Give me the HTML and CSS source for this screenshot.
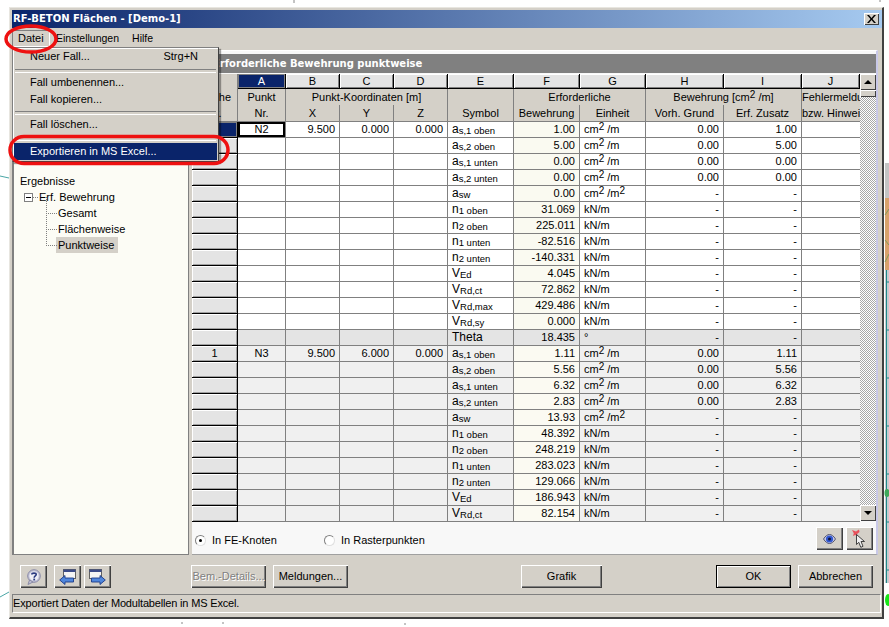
FILE: index.html
```html
<!DOCTYPE html>
<html lang="de">
<head>
<meta charset="utf-8">
<title>RF-BETON Flächen</title>
<link rel="stylesheet" href="styles.css">
</head>
<body>
<div class="desktop">
  <svg class="backdrop" width="889" height="627" viewBox="0 0 889 627">
    <rect x="885" y="163" width="4" height="35" fill="#c4c4c4"/>
    <rect x="885" y="198" width="4" height="72" fill="#d9a26c"/>
    <path d="M885 215l4-6M885 240l4 5M885 262l4-8" stroke="#7f9a5c" fill="none"/>
    <rect x="885" y="270" width="4" height="313" fill="#c8ccd0"/>
    <path d="M886.500 270V583" stroke="#1f8a8a" fill="none"/>
    <path d="M887 282h2M887 330h2M887 378h2M887 426h2M887 474h2M887 522h2M887 570h2" stroke="#1f8a8a" fill="none"/>
    <ellipse cx="887" cy="493" rx="2.500" ry="4" fill="#3fa85a"/>
    <ellipse cx="888" cy="600" rx="3" ry="6" fill="#19e619"/>
    <path d="M0 176L9 178M0 597L9 592" stroke="#4aa6a6" fill="none"/>
    <path d="M294 0v3M223 622v2M405 623v2M182 622v2M880 0v2" stroke="#888" fill="none"/>
  </svg>

  <div class="window">
    <div class="titlebar">
      <span class="title">RF-BETON Flächen - [Demo-1]</span>
      <span class="close"><svg width="9" height="8" viewBox="0 0 9 8"><path d="M0 0h2l2.500 3L7 0h2L5.500 4 9 8H7L4.500 5 2 8H0l3.500-4z" fill="#000"/></svg></span>
    </div>
    <div class="menubar">
      <span class="menu-top open">Datei</span>
      <span class="menu-top">Einstellungen</span>
      <span class="menu-top">Hilfe</span>
    </div>

    <div class="content">
      <aside class="sidebar">
        <ul class="tree">
          <li class="tree-root">Ergebnisse</li>
          <li class="tree-branch"><span class="expander"></span><span class="dots"></span>Erf. Bewehrung</li>
          <li class="tree-leaf">Gesamt</li>
          <li class="tree-leaf">Flächenweise</li>
          <li class="tree-leaf last"><span class="selected">Punktweise</span></li>
        </ul>
      </aside>

      <section class="panel">
        <h1 class="band">Erforderliche Bewehrung punktweise</h1>
        <div class="grid-wrap">
          <table class="grid">
            <colgroup>
              <col class="c-rh"><col class="c-a"><col class="c-xyz"><col class="c-xyz"><col class="c-xyz"><col class="c-sym"><col class="c-sym"><col class="c-sym"><col class="c-hi"><col class="c-hi"><col class="c-j">
            </colgroup>
            <thead>
              <tr class="letters">
                <th class="corner"></th><th class="active">A</th><th>B</th><th>C</th><th>D</th><th>E</th><th>F</th><th>G</th><th>H</th><th>I</th><th>J</th>
              </tr>
              <tr class="head1">
                <th class="hd sep">Fläche</th><th class="hd sep">Punkt</th><th class="hd sep" colspan="3">Punkt-Koordinaten [m]</th><th class="hd sep"></th><th class="hd sep" colspan="2">Erforderliche</th><th class="hd sep" colspan="2">Bewehrung [cm<sup>2</sup> /m]</th><th class="hd left">Fehlermeldung</th>
              </tr>
              <tr class="head2">
                <th class="hd sep">Nr.</th><th class="hd sep">Nr.</th><th class="hd sep">X</th><th class="hd sep">Y</th><th class="hd sep">Z</th><th class="hd sep">Symbol</th><th class="hd sep">Bewehrung</th><th class="hd sep">Einheit</th><th class="hd sep">Vorh. Grund</th><th class="hd sep">Erf. Zusatz</th><th class="hd left">bzw. Hinweise</th>
              </tr>
            </thead>
            <tbody>
              <tr><td class="rh cur"></td><td class="c focus">N2</td><td>9.500</td><td>0.000</td><td>0.000</td><td class="s">a<sub>s,1 oben</sub></td><td class="f">1.00</td><td class="u">cm<sup>2</sup> /m</td><td>0.00</td><td>1.00</td><td></td></tr>
              <tr><td class="rh"></td><td></td><td></td><td></td><td></td><td class="s">a<sub>s,2 oben</sub></td><td class="f">5.00</td><td class="u">cm<sup>2</sup> /m</td><td>0.00</td><td>5.00</td><td></td></tr>
              <tr><td class="rh"></td><td></td><td></td><td></td><td></td><td class="s">a<sub>s,1 unten</sub></td><td class="f">0.00</td><td class="u">cm<sup>2</sup> /m</td><td>0.00</td><td>0.00</td><td></td></tr>
              <tr><td class="rh"></td><td></td><td></td><td></td><td></td><td class="s">a<sub>s,2 unten</sub></td><td class="f">0.00</td><td class="u">cm<sup>2</sup> /m</td><td>0.00</td><td>0.00</td><td></td></tr>
              <tr><td class="rh"></td><td></td><td></td><td></td><td></td><td class="s">a<sub>sw</sub></td><td class="f">0.00</td><td class="u">cm<sup>2</sup> /m<sup>2</sup></td><td>-</td><td>-</td><td></td></tr>
              <tr><td class="rh"></td><td></td><td></td><td></td><td></td><td class="s">n<sub>1 oben</sub></td><td class="f">31.069</td><td class="u">kN/m</td><td>-</td><td>-</td><td></td></tr>
              <tr><td class="rh"></td><td></td><td></td><td></td><td></td><td class="s">n<sub>2 oben</sub></td><td class="f">225.011</td><td class="u">kN/m</td><td>-</td><td>-</td><td></td></tr>
              <tr><td class="rh"></td><td></td><td></td><td></td><td></td><td class="s">n<sub>1 unten</sub></td><td class="f">-82.516</td><td class="u">kN/m</td><td>-</td><td>-</td><td></td></tr>
              <tr><td class="rh"></td><td></td><td></td><td></td><td></td><td class="s">n<sub>2 unten</sub></td><td class="f">-140.331</td><td class="u">kN/m</td><td>-</td><td>-</td><td></td></tr>
              <tr><td class="rh"></td><td></td><td></td><td></td><td></td><td class="s">V<sub>Ed</sub></td><td class="f">4.045</td><td class="u">kN/m</td><td>-</td><td>-</td><td></td></tr>
              <tr><td class="rh"></td><td></td><td></td><td></td><td></td><td class="s">V<sub>Rd,ct</sub></td><td class="f">72.862</td><td class="u">kN/m</td><td>-</td><td>-</td><td></td></tr>
              <tr><td class="rh"></td><td></td><td></td><td></td><td></td><td class="s">V<sub>Rd,max</sub></td><td class="f">429.486</td><td class="u">kN/m</td><td>-</td><td>-</td><td></td></tr>
              <tr><td class="rh"></td><td></td><td></td><td></td><td></td><td class="s">V<sub>Rd,sy</sub></td><td class="f">0.000</td><td class="u">kN/m</td><td>-</td><td>-</td><td></td></tr>
              <tr class="theta"><td class="rh"></td><td></td><td></td><td></td><td></td><td class="s">Theta</td><td class="f">18.435</td><td class="u">°</td><td>-</td><td>-</td><td></td></tr>
              <tr class="alt"><td class="rh">1</td><td class="c">N3</td><td>9.500</td><td>6.000</td><td>0.000</td><td class="s">a<sub>s,1 oben</sub></td><td class="f">1.11</td><td class="u">cm<sup>2</sup> /m</td><td>0.00</td><td>1.11</td><td></td></tr>
              <tr class="alt"><td class="rh"></td><td></td><td></td><td></td><td></td><td class="s">a<sub>s,2 oben</sub></td><td class="f">5.56</td><td class="u">cm<sup>2</sup> /m</td><td>0.00</td><td>5.56</td><td></td></tr>
              <tr class="alt"><td class="rh"></td><td></td><td></td><td></td><td></td><td class="s">a<sub>s,1 unten</sub></td><td class="f">6.32</td><td class="u">cm<sup>2</sup> /m</td><td>0.00</td><td>6.32</td><td></td></tr>
              <tr class="alt"><td class="rh"></td><td></td><td></td><td></td><td></td><td class="s">a<sub>s,2 unten</sub></td><td class="f">2.83</td><td class="u">cm<sup>2</sup> /m</td><td>0.00</td><td>2.83</td><td></td></tr>
              <tr class="alt"><td class="rh"></td><td></td><td></td><td></td><td></td><td class="s">a<sub>sw</sub></td><td class="f">13.93</td><td class="u">cm<sup>2</sup> /m<sup>2</sup></td><td>-</td><td>-</td><td></td></tr>
              <tr class="alt"><td class="rh"></td><td></td><td></td><td></td><td></td><td class="s">n<sub>1 oben</sub></td><td class="f">48.392</td><td class="u">kN/m</td><td>-</td><td>-</td><td></td></tr>
              <tr class="alt"><td class="rh"></td><td></td><td></td><td></td><td></td><td class="s">n<sub>2 oben</sub></td><td class="f">248.219</td><td class="u">kN/m</td><td>-</td><td>-</td><td></td></tr>
              <tr class="alt"><td class="rh"></td><td></td><td></td><td></td><td></td><td class="s">n<sub>1 unten</sub></td><td class="f">283.023</td><td class="u">kN/m</td><td>-</td><td>-</td><td></td></tr>
              <tr class="alt"><td class="rh"></td><td></td><td></td><td></td><td></td><td class="s">n<sub>2 unten</sub></td><td class="f">129.066</td><td class="u">kN/m</td><td>-</td><td>-</td><td></td></tr>
              <tr class="alt"><td class="rh"></td><td></td><td></td><td></td><td></td><td class="s">V<sub>Ed</sub></td><td class="f">186.943</td><td class="u">kN/m</td><td>-</td><td>-</td><td></td></tr>
              <tr class="alt"><td class="rh"></td><td></td><td></td><td></td><td></td><td class="s">V<sub>Rd,ct</sub></td><td class="f">82.154</td><td class="u">kN/m</td><td>-</td><td>-</td><td></td></tr>
            </tbody>
          </table>
          <div class="scrollbar">
            <span class="sb-btn"><i class="arrow-up"></i></span>
            <span class="sb-thumb"></span>
            <span class="sb-track"></span>
            <span class="sb-btn"><i class="arrow-down"></i></span>
          </div>
        </div>
        <div class="options">
          <label class="opt opt-first"><span class="radio on"></span>In FE-Knoten</label>
          <label class="opt"><span class="radio"></span>In Rasterpunkten</label>
          <span class="opt-tools">
            <button class="btn icon-btn"><svg width="13" height="10" viewBox="0 0 13 10"><path d="M.5 5C2.500 1.800 4.500.5 6.500.5s4 1.300 6 4.500c-2 3.200-4 4.500-6 4.500S2.500 8.200.5 5z" fill="#c8cde8" stroke="#55556e"/><circle cx="6.500" cy="5" r="3.600" fill="#3358d0"/><circle cx="6.500" cy="5" r="1.500" fill="#0c1238"/></svg></button>
            <button class="btn icon-btn"><svg width="18" height="20" viewBox="0 0 18 20"><path d="M1 1l4 1.500L8 .5l.5 2.500-2.500 2 .8 2.500-2.600-1.500-2.200 1 .8-2.800z" fill="#e8505a"/><path d="M5.500 5.500v10l2.300-2.200 2 5 2.200-1-2-4.800h3.500z" fill="#f0f0f0" stroke="#303030" stroke-width=".9"/></svg></button>
          </span>
        </div>
      </section>
    </div>

    <div class="footer">
      <button class="btn icon-btn b-help"><svg width="15" height="16" viewBox="0 0 15 16"><circle cx="8" cy="7" r="6.300" fill="#c4c4d8" stroke="#8a8aa6"/><path d="M3.500 11L2 15.500 7 13z" fill="#c4c4d8" stroke="#8a8aa6"/><circle cx="8" cy="7" r="4.600" fill="#eeeef6"/><path d="M5.800 5.500C5.800 3.600 10.200 3.600 10.200 5.500 10.200 7 8.200 7 8.200 8.800" fill="none" stroke="#2a3a80" stroke-width="1.600"/><rect x="7.300" y="9.600" width="1.800" height="1.800" fill="#2a3a80"/></svg></button>
      <button class="btn icon-btn b-prev"><svg width="17" height="16" viewBox="0 0 17 16"><rect x="4.500" y=".5" width="12" height="9" fill="#f4f4f4" stroke="#606060"/><rect x="4.500" y=".5" width="12" height="2.500" fill="#3a4a88"/><path d="M.7 11L6 6.500V9h8.500v4H6v2.500z" fill="#4f86dc" stroke="#1c3a88" stroke-width=".9"/></svg></button>
      <button class="btn icon-btn b-next"><svg width="17" height="16" viewBox="0 0 17 16"><rect x=".5" y=".5" width="12" height="9" fill="#f4f4f4" stroke="#606060"/><rect x=".5" y=".5" width="12" height="2.500" fill="#3a4a88"/><path d="M16.300 11L11 6.500V9H2.500v4H11v2.500z" fill="#4f86dc" stroke="#1c3a88" stroke-width=".9"/></svg></button>
      <button class="btn disabled b-details">Bem.-Details...</button>
      <button class="btn b-msg">Meldungen...</button>
      <button class="btn b-graph">Grafik</button>
      <button class="btn default b-ok">OK</button>
      <button class="btn b-cancel">Abbrechen</button>
    </div>
    <div class="status">Exportiert Daten der Modultabellen in MS Excel.</div>
  </div>

  <div class="dropdown">
    <div class="mi"><span>Neuer Fall...</span><span class="key">Strg+N</span></div>
    <div class="ms"></div>
    <div class="mi"><span>Fall umbenennen...</span></div>
    <div class="mi"><span>Fall kopieren...</span></div>
    <div class="ms ms-b"></div>
    <div class="mi"><span>Fall löschen...</span></div>
    <div class="ms ms-c"></div>
    <div class="mi hot"><span>Exportieren in MS Excel...</span></div>
  </div>

  <svg class="marks" width="889" height="627" viewBox="0 0 889 627">
    <ellipse cx="31" cy="39" rx="25" ry="13" fill="none" stroke="#ee1111" stroke-width="3.500"/>
    <rect x="10" y="136.500" width="218" height="27" rx="14" ry="13.500" fill="none" stroke="#ee1111" stroke-width="3.500"/>
  </svg>
</div>
</body>
</html>
```
FILE: styles.css
```css
* { box-sizing: border-box; }
html, body { margin: 0; padding: 0; background: #fff; }
body { font: 11px/15px "Liberation Sans", Arial, sans-serif; color: #000; overflow: hidden; }

.desktop { position: relative; width: 889px; height: 627px; padding: 7px 0 0 9px; overflow: hidden; }
.backdrop, .marks { position: absolute; left: 0; top: 0; }
.marks { pointer-events: none; }

.window {
  position: relative;
  width: 875px; height: 612px;
  display: flex; flex-direction: column;
  background: #d4d0c8;
  border-style: solid; border-width: 1px 2px 2px 1px;
  border-color: #e8e6e0 #404040 #404040 #e8e6e0;
  padding: 2px 0 4px 2px;
}

.titlebar {
  height: 18px; flex: none;
  display: flex; align-items: center; justify-content: space-between;
  padding: 0 3px 0 1px;
  background: linear-gradient(90deg, #0a246a, #a6caf0);
}
.title { font: bold 10px/18px "DejaVu Sans", Verdana, sans-serif; color: #fff; }
.close {
  width: 15px; height: 12px; display: flex; align-items: center; justify-content: center;
  background: #d4d0c8;
  box-shadow: inset 1px 1px #fff, inset -1px -1px #404040;
}

.menubar { height: 22px; flex: none; display: flex; align-items: flex-start; padding-top: 2px; font-size: 10.5px; }
.menu-top { padding: 1px 6px 0; height: 17px; margin-right: 1px; }
.menu-top.open { width: 38px; font-size: 11px; box-shadow: inset 1px 1px #808080, inset -1px -1px #fff; margin-right: 0; }

.content { height: 505px; flex: none; display: flex; gap: 3px; }

.sidebar {
  width: 177px; flex: none;
  background: #fcfcf5;
  border: 1px solid #808080;
  border-left-width: 2px;
  padding-top: 122px;
}
.tree { list-style: none; margin: 0; padding: 0; }
.tree li { height: 16px; line-height: 16px; position: relative; white-space: nowrap; }
.tree-root { padding-left: 6px; }
.tree-branch { padding-left: 25px; }
.tree-leaf { padding-left: 44px; }
.expander {
  position: absolute; left: 10px; top: 4px; width: 9px; height: 9px;
  border: 1px solid #808080; background: #fff;
}
.expander::after { content: ""; position: absolute; left: 1px; top: 3px; width: 5px; height: 1px; background: #000; }
.dots { position: absolute; left: 19px; top: 8px; width: 5px; border-top: 1px dotted #808080; }
.tree-leaf::before {
  content: ""; position: absolute; left: 32px; top: -8px; width: 10px; height: 16px;
  border-left: 1px dotted #808080; border-bottom: 1px dotted #808080;
}
.selected { display: inline-block; background: #d4d0c8; margin-left: -2px; padding: 0 4px 0 2px; height: 16px; }

.panel {
  width: 686px; flex: none;
  display: flex; flex-direction: column;
  background: #f8f8f8;
  padding-top: 3px;
  border-top: 1px solid #fff;
  border-right: 2px solid #c8c8e8;
  border-bottom: 1px solid #a0a0a0;
}
.band {
  margin: 0; height: 19px; flex: none;
  background: #808080; color: #fff;
  font: bold 10px/19px "DejaVu Sans", Verdana, sans-serif;
  padding-left: 21px;
}
.grid-wrap { display: flex; height: 447px; flex: none; margin-top: 1px; }

.grid { table-layout: fixed; border-collapse: separate; border-spacing: 0; width: 668px; flex: none; }
.c-rh { width: 46px; } .c-a { width: 48px; } .c-xyz { width: 54px; } .c-sym { width: 66px; } .c-hi { width: 78px; } .c-j { width: 58px; }

.grid th, .grid td { padding: 0; overflow: hidden; white-space: nowrap; font-weight: normal; }
.letters th {
  height: 15px; line-height: 13px; text-align: center;
  background: #e4e4e4;
  border-right: 1px solid #000; border-bottom: 1px solid #000;
  box-shadow: inset 1px 1px #fff, inset -1px -1px #808080;
}
.letters th.corner { background: #d4d0c8; box-shadow: none; border-bottom: 0; border-right-color: #808080; }
.letters th.active { background: #0a246a; color: #fff; box-shadow: inset 0 0 0 1px #808080; }
.head1 th, .head2 th { background: #d4d0c8; text-align: center; line-height: 15px; }
.head1 th { height: 16px; }
.head2 th { height: 17px; border-bottom: 1px solid #808080; }
.grid th.sep { border-right: 1px solid #808080; }
.grid th.left { text-align: left; padding-left: 0; }
.grid sup { font-size: 10px; line-height: 0; vertical-align: 3px; }

.grid td {
  height: 16px; line-height: 15px;
  text-align: right; padding: 0 4px 0 0;
  background: #fff;
  border-right: 1px solid #808080; border-bottom: 1px solid #808080;
}
.grid td:last-child { border-right: 0; }
.grid td.s, .grid td.u { text-align: left; padding: 0 0 0 4px; }
.grid td.s { font-size: 12px; line-height: 13px; }
.grid td.u { line-height: 13px; }
.grid td.c { text-align: center; padding: 0; }
.grid td.f { background: #fafaf1; }
.grid td.focus { box-shadow: inset 0 0 0 2px #000; }
.grid sub { font-size: 9.5px; line-height: 0; vertical-align: -1px; }
.grid td.rh {
  text-align: center; padding: 0;
  background: #e4e4e4;
  border-right: 1px solid #000; border-bottom: 1px solid #000;
  box-shadow: inset 1px 1px #fff, inset -1px -1px #a0a0a0;
}
.grid td.rh.cur { background: #0a246a; box-shadow: inset 0 0 0 1px #808080; }
.alt td { background: #f0f0f0; }
.alt td.f { background: #fbfaf2; }
.theta td, .theta td.f { background: #e4e4e4; }

.scrollbar { width: 16px; flex: none; display: flex; flex-direction: column; }
.sb-btn {
  height: 16px; flex: none; display: flex; align-items: center; justify-content: center;
  background: #d4d0c8;
  box-shadow: inset 1px 1px #fff, inset -1px -1px #404040;
}
.sb-thumb { height: 7px; flex: none; background: #d4d0c8; box-shadow: inset 1px 1px #fff, inset -1px -1px #404040; }
.sb-track {
  flex: 1;
  background: repeating-conic-gradient(#a8a8a8 0 25%, #fff 0 50%) 0 0 / 2px 2px;
}
.arrow-up { border: 4px solid transparent; border-top: 0; border-bottom: 4px solid #000; }
.arrow-down { border: 4px solid transparent; border-bottom: 0; border-top: 4px solid #000; }

.options { flex: 1; display: flex; align-items: flex-start; padding: 6px 3px 0 3px; }
.opt { display: flex; align-items: center; height: 26px; }
.opt-first { width: 129px; }
.radio {
  position: relative; width: 11px; height: 11px; margin-right: 6px; border-radius: 50%;
  background: #fff; border: 1px solid #808080; border-right-color: #e0e0e0; border-bottom-color: #e0e0e0;
}
.radio.on::after { content: ""; position: absolute; left: 3px; top: 3px; width: 3px; height: 3px; border-radius: 50%; background: #000; }
.opt-tools { margin-left: auto; display: flex; gap: 3px; }

.btn {
  font: 11px/15px "Liberation Sans", Arial, sans-serif; color: #000;
  height: 23px; padding: 0; margin: 0;
  background: #d4d0c8;
  border: 0;
  box-shadow: inset 1px 1px #fff, inset -1px -1px #404040, inset -2px -2px #808080;
  display: flex; align-items: center; justify-content: center;
  flex: none;
}
.icon-btn { width: 27px; }
.btn.disabled { color: #808080; text-shadow: 1px 1px #fff; }
.btn.default { box-shadow: inset 0 0 0 1px #000, inset 2px 2px #fff, inset -2px -2px #808080; }

.footer { height: 39px; flex: none; display: flex; align-items: flex-start; padding-top: 10px; }
.b-help { margin-left: 8px; }
.b-prev { margin-left: 7px; }
.b-next { margin-left: 3px; }
.b-details { width: 75px; margin-left: 80px; }
.b-msg { width: 75px; margin-left: 7px; }
.b-graph { width: 81px; margin-left: 173px; }
.b-ok { width: 75px; margin-left: 114px; }
.b-cancel { width: 75px; margin-left: 7px; }

.status {
  height: 19px; flex: none; width: 869px;
  line-height: 17px; padding-left: 0; letter-spacing: -.17px;
  border: 1px solid; border-color: #808080 #fff #fff #808080;
}

.dropdown {
  position: absolute; left: 12px; top: 47px; width: 207px; height: 115px;
  background: #d4d0c8;
  border: 1px solid; border-color: #808080 #404040 #404040 #808080;
  box-shadow: inset 1px 1px #fff, 2px 2px 1px rgba(0, 0, 0, .35);
}
.mi { height: 17px; line-height: 17px; padding: 0 8px 0 16px; margin: 0 1px; display: flex; justify-content: space-between; }
.mi .key { margin-right: 11px; }
.mi.hot { background: #0a246a; color: #fff; }
.ms { height: 9px; position: relative; }
.ms::after { content: ""; position: absolute; left: 2px; right: 2px; top: 4px; height: 2px; border-top: 1px solid #808080; border-bottom: 1px solid #fff; }
.ms-b { height: 8px; }
.ms-b::after { top: 3px; }
.ms-c { height: 10px; }
```
